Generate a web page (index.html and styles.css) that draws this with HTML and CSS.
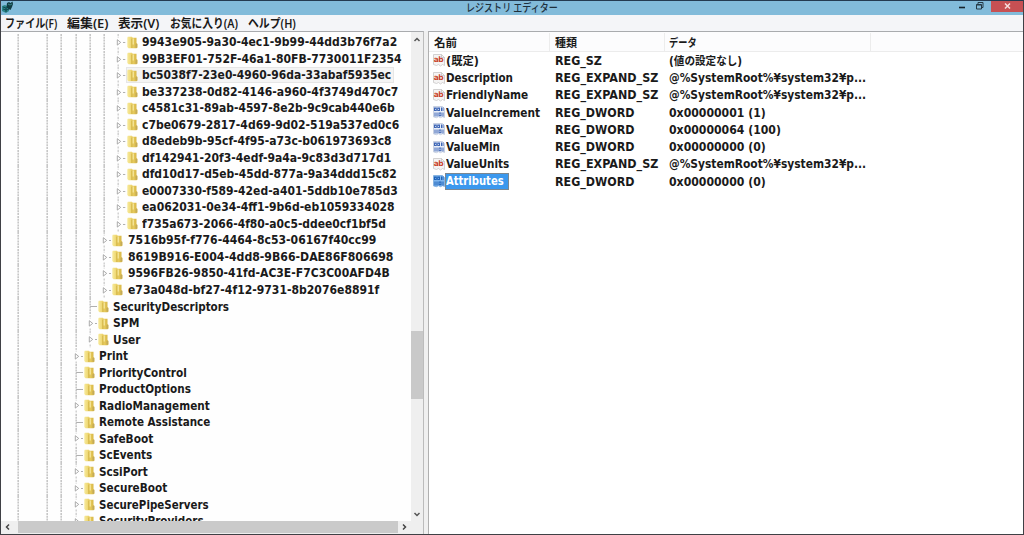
FILE: index.html
```html
<!DOCTYPE html>
<html lang="ja">
<head>
<meta charset="utf-8">
<title>レジストリ エディター</title>
<link rel="stylesheet" href="styles.css">
</head>
<body>
<svg class="defs" width="0" height="0">
  <defs>
    <linearGradient id="gold" x1="0" x2="1" y1="0" y2="0"><stop offset="0" stop-color="#f7ea9c"/><stop offset=".5" stop-color="#ebd064"/><stop offset="1" stop-color="#d3b13f"/></linearGradient>
    <symbol id="folder" viewBox="0 0 11 13"><path d="M.8.800h4l1 1H9.500v5.200l1 1v3.600l-1 .6H1.500L.3 11V1.800z" fill="url(#gold)"/><path d="M4.900 2.500v9.500" stroke="#cbaa3c" stroke-width=".9"/><path d="M6.200 2.500v6" stroke="#fbf0b0" stroke-width="1"/><path d="M9.200 8v3.500" stroke="#b9a466" stroke-width="1"/></symbol>
    <symbol id="string" viewBox="0 0 12 13"><path d="M.5.500h8l3 3v8l-2-1-2 1.500-2-1.500-2 1-3-1z" fill="#f5f4f4" stroke="#c9c7c7" stroke-width=".8"/><path d="M8.500.500v3h3" fill="none" stroke="#bbb" stroke-width=".7"/><text x=".8" y="8" class="ab">ab</text></symbol>
    <symbol id="binary" viewBox="0 0 12 13"><path d="M.5.500h9l2 2v9l-2-.8-2 1-2-1-2 1-3-.8z" fill="#e7edf8" stroke="#bdc7da" stroke-width=".8"/><g fill="none" stroke="#3d65b5" stroke-width="1"><rect x="1.500" y="2" width="1.800" height="2.500"/><rect x="4.700" y="2" width="1.800" height="2.500"/><path d="M8.500 1.500v3.500M10 1.500v3.500M2 6.500v4M4 6.500v4M10 6.500v4"/><rect x="6" y="7" width="2" height="2.700"/></g></symbol>
    <symbol id="binary-selected" viewBox="0 0 12 13"><path d="M.5.500h9l2 2v9l-2-.8-2 1-2-1-2 1-3-.8z" fill="#7fb6ee" stroke="#78a9dc" stroke-width=".8"/><g fill="none" stroke="#1f62b8" stroke-width="1"><rect x="1.500" y="2" width="1.800" height="2.500"/><rect x="4.700" y="2" width="1.800" height="2.500"/><path d="M8.500 1.500v3.500M10 1.500v3.500M2 6.500v4M4 6.500v4M10 6.500v4"/><rect x="6" y="7" width="2" height="2.700"/></g></symbol>
  </defs>
</svg>
<div class="window">
  <header class="titlebar">
    <svg class="app-icon" viewBox="0 0 12 12"><path d="M0 5l3-1 4 2v4l-3 2-4-2z" fill="#2a8588"/><path d="M1 6l3 1 3-1M4 7v4M1 8l3 1 3-1" stroke="#0c3c43" fill="none" stroke-width=".8"/><path d="M5 2l2-1 1.500 1L10.500.500 11 3l-1 3-1.500 3-2-1-2-2z" fill="#123d43"/><path d="M6 3l2 1 2-1" stroke="#4ba7a7" stroke-width=".7" fill="none"/></svg>
    <h1 class="title"><span class="fit" data-w="92">レジストリ エディター</span></h1>
    <svg class="window-btn" viewBox="0 0 18 14"><path d="M6 6.500h6" stroke="#17232b" stroke-width="1.600"/></svg>
    <svg class="window-btn" viewBox="0 0 18 14"><path d="M5.500 3.500h5v4.500h-5zM7 3V1.500h5v5h-1.500M5.500 4h5" fill="none" stroke="#263b47" stroke-width="1"/></svg>
    <svg class="close-btn" viewBox="0 0 32 11"><path d="M14 2.500l5 5M19 2.500l-5 5" stroke="#f6dede" stroke-width="1.500"/></svg>
  </header>
  <nav class="menu">
    <span class="menu-item m-file"><span class="fit" data-w="52">ファイル(F)</span></span>
    <span class="menu-item m-edit"><span class="fit" data-w="41">編集(E)</span></span>
    <span class="menu-item m-view"><span class="fit" data-w="41">表示(V)</span></span>
    <span class="menu-item m-fav"><span class="fit" data-w="68">お気に入り(A)</span></span>
    <span class="menu-item"><span class="fit" data-w="48">ヘルプ(H)</span></span>
  </nav>
  <main class="panes">
    <section class="tree-pane">
      <div class="tree-row-area">
        <div class="tree" id="tree"></div>
        <div class="vscroll">
          <svg class="v-arrow" viewBox="0 0 12 16"><path d="M3.500 9L6 6.500 8.500 9" fill="none" stroke="#555" stroke-width="1.500"/></svg>
          <div class="v-thumb"></div>
          <svg class="v-arrow" viewBox="0 0 12 16"><path d="M3.500 8L6 10.500 8.500 8" fill="none" stroke="#555" stroke-width="1.500"/></svg>
        </div>
      </div>
      <div class="hscroll">
        <svg class="h-arrow" viewBox="0 0 17 12"><path d="M8 3.500L5.500 6 8 8.500" fill="none" stroke="#444" stroke-width="1.500"/></svg>
        <div class="h-thumb"></div>
        <svg class="h-arrow" viewBox="0 0 17 12"><path d="M5 3.500L7.500 6 5 8.500" fill="none" stroke="#444" stroke-width="1.500"/></svg>
      </div>
    </section>
    <section class="value-pane" id="values"></section>
  </main>
</div>
<script src="app.js"></script>
</body>
</html>
```
FILE: styles.css
```css
* { box-sizing: border-box; }
body { margin: 0; overflow: hidden; }
.defs { display: block; }
.window {
  width: 1024px; height: 535px;
  display: flex; flex-direction: column;
  border: 1px solid #3f4045; border-top-color: #243a50;
  background: #f4f5f8;
  font: bold 11.600px/16px "DejaVu Sans", "Noto Sans CJK JP", sans-serif;
  color: #1a1a1a;
}
.fit { display: inline-block; white-space: pre; transform-origin: 0 50%; }
.titlebar { height: 14px; flex: none; display: flex; background: #82bbda; }
.app-icon { width: 12px; height: 12px; margin: 0 0 0 1px; }
.title {
  margin: 0 0 0 452px; width: 487px;
  font: 500 11px/12px "Noto Sans CJK JP", sans-serif; color: #1e303c;
}
.window-btn { width: 18px; height: 14px; }
.close-btn { width: 32px; height: 11px; margin-left: 2px; background: #c75053; flex: 1; }
.menu {
  height: 16px; flex: none; display: flex; padding-left: 4px;
  font: 600 12px/17px "Noto Sans", "Noto Sans CJK JP", sans-serif;
}
.menu-item { width: 50px; }
.m-file { width: 62px; }
.m-edit { width: 51px; }
.m-view { width: 52px; }
.m-fav { width: 78px; }
.panes { flex: 1; min-height: 0; display: flex; gap: 4px; background: #f0f0f0; }
.tree-pane {
  width: 423px; display: flex; flex-direction: column;
  border-top: 1px solid #a9abae; border-right: 1px solid #bcbcbc;
  background: #fefefe;
}
.tree-row-area { flex: 1; min-height: 0; display: flex; }
.tree { flex: 1; overflow: hidden; padding: 2px 0 0 10.350px; }
.row { height: 16.520px; display: flex; align-items: center; }
.guide { width: 14.300px; height: 16.520px; flex: none; }
.folder { width: 11px; height: 13px; flex: none; margin-left: 1px; }
.label { margin-left: 4.200px; }
.entry { display: flex; align-items: center; height: 16px; }
.entry.current { background: #f4f4f4; outline: 1px solid #e6e6e6; outline-offset: -1px; width: 268px; }
.vscroll { width: 12px; display: flex; flex-direction: column; background: #efefef; }
.v-arrow { width: 12px; height: 16px; flex: none; }
.v-thumb { height: 68px; margin: 283px 0 auto; background: #c9c9c9; }
.hscroll { height: 13px; flex: none; display: flex; padding-right: 8px; background: #efefef; }
.h-arrow { width: 17px; height: 12px; flex: none; }
.h-thumb { width: 380px; height: 12px; background: #cacaca; }
.value-pane { flex: 1; background: #fff; border-top: 1px solid #a9abae; border-left: 1px solid #b0b0b0; }
.cells { display: flex; height: 17.270px; align-items: center; }
.head { height: 20px; padding-top: 1px; margin-bottom: .2px; border-bottom: 1px solid #ececec; background: #fcfcfd; font-family: "Noto Sans CJK JP", sans-serif; font-size: 11.500px; }
.head .name { padding-left: 5px; }
.head .name, .head .kind, .head .data { height: 18px; line-height: 18px; border-right: 1px solid #ececec; }
.name { width: 121px; display: flex; align-items: center; }
.kind { width: 115px; padding-left: 5px; }
.data { width: 206px; padding-left: 4px; }
.value-icon { width: 12px; height: 13px; flex: none; margin-left: 4px; }
.value-name { margin-left: 1px; white-space: nowrap; }
.selected .value-name { width: 64px; height: 17px; margin-left: 0; background: #3b98ee; color: #fff; outline: 1px solid #7b8791; outline-offset: -1px; padding-left: 1px; }
.ab { font: bold 7.500px "DejaVu Sans", sans-serif; fill: #c9442c; letter-spacing: -.5px; }
```
FILE: app.js
```js
// Each key: depth, has children, name, displayed width.
const keys = [
  [7, 1, "9943e905-9a30-4ec1-9b99-44dd3b76f7a2", 255],
  [7, 1, "99B3EF01-752F-46a1-80FB-7730011F2354", 260],
  [7, 1, "bc5038f7-23e0-4960-96da-33abaf5935ec", 249.5],
  [7, 1, "be337238-0d82-4146-a960-4f3749d470c7", 256],
  [7, 1, "c4581c31-89ab-4597-8e2b-9c9cab440e6b", 253],
  [7, 1, "c7be0679-2817-4d69-9d02-519a537ed0c6", 257],
  [7, 1, "d8edeb9b-95cf-4f95-a73c-b061973693c8", 249.5],
  [7, 1, "df142941-20f3-4edf-9a4a-9c83d3d717d1", 249],
  [7, 1, "dfd10d17-d5eb-45dd-877a-9a34ddd15c82", 255],
  [7, 1, "e0007330-f589-42ed-a401-5ddb10e785d3", 256],
  [7, 1, "ea062031-0e34-4ff1-9b6d-eb1059334028", 253],
  [7, 1, "f735a673-2066-4f80-a0c5-ddee0cf1bf5d", 244],
  [6, 1, "7516b95f-f776-4464-8c53-06167f40cc99", 248.5],
  [6, 1, "8619B916-E004-4dd8-9B66-DAE86F806698", 265],
  [6, 1, "9596FB26-9850-41fd-AC3E-F7C3C00AFD4B", 261.5],
  [6, 1, "e73a048d-bf27-4f12-9731-8b2076e8891f", 251],
  [5, 0, "SecurityDescriptors", 116.5],
  [5, 1, "SPM", 26],
  [5, 1, "User", 27.5],
  [4, 1, "Print", 29],
  [4, 0, "PriorityControl", 88],
  [4, 0, "ProductOptions", 92],
  [4, 1, "RadioManagement", 110.5],
  [4, 0, "Remote Assistance", 111],
  [4, 1, "SafeBoot", 54],
  [4, 0, "ScEvents", 53],
  [4, 1, "ScsiPort", 49],
  [4, 1, "SecureBoot", 68],
  [4, 1, "SecurePipeServers", 110],
  [4, 1, "SecurityProviders", 105],
];
const dotted = 'stroke="#b4b4b4" stroke-width="1.2" stroke-dasharray="2 .8"';
const line = `<svg class="guide" viewBox="0 0 14.3 16.52"><path d="M7.15 0v16.52" ${dotted}/></svg>`;
const blank = '<span class="guide"></span>';
const branch = '<svg class="guide" viewBox="0 0 14.3 16.52"><path d="M7.15 0v3.5M7.15 13.5v3" stroke="#c0c0c0" stroke-width="1.1" stroke-dasharray="2 .8"/><path d="M6.3 5.7v5.4l3.4-2.7z" fill="#fff" stroke="#a2a2a2" stroke-width=".9"/><path d="M12 8.500h2.300" stroke="#b0b0b0"/></svg>';
const leaf = `<svg class="guide" viewBox="0 0 14.3 16.52"><path d="M7.15 0v16.52" ${dotted}/><path d="M7.15 8.500h7.2" stroke="#b0b0b0"/></svg>`;
const fit = (text, width) => `<span class="fit" data-w="${width}">${text}</span>`;

document.getElementById("tree").innerHTML = keys.map(([depth, open, name, width], i) => {
  let guides = "";
  for (let d = 0; d < depth; d++) guides += d === 1 ? blank : line;
  return `<div class="row">${guides}${open ? branch : leaf}<div class="entry${i === 2 ? " current" : ""}"><svg class="folder"><use href="#folder"/></svg><span class="label">${fit(name, width)}</span></div></div>`;
}).join("");

const path = "@%SystemRoot%¥system32¥p...";
const values = [
  ["string", "(既定)", 33, "REG_SZ", 47, "(値の設定なし)", 73],
  ["string", "Description", 67, "REG_EXPAND_SZ", 103, path, 197],
  ["string", "FriendlyName", 82, "REG_EXPAND_SZ", 103, path, 197],
  ["binary", "ValueIncrement", 94, "REG_DWORD", 79.5, "0x00000001 (1)", 97],
  ["binary", "ValueMax", 57, "REG_DWORD", 79.5, "0x00000064 (100)", 112],
  ["binary", "ValueMin", 54, "REG_DWORD", 79.5, "0x00000000 (0)", 97],
  ["string", "ValueUnits", 63, "REG_EXPAND_SZ", 103, path, 197],
  ["binary-selected", "Attributes", 58, "REG_DWORD", 79.5, "0x00000000 (0)", 97],
];
document.getElementById("values").innerHTML =
  `<div class="cells head"><div class="name">${fit("名前", 23)}</div><div class="kind">${fit("種類", 22)}</div><div class="data">${fit("データ", 28)}</div></div>` +
  values.map(([icon, name, nw, kind, kw, data, dw], i) =>
    `<div class="cells${i === 7 ? " selected" : ""}"><div class="name"><svg class="value-icon"><use href="#${icon}"/></svg><span class="value-name">${fit(name, nw)}</span></div><div class="kind">${fit(kind, kw)}</div><div class="data">${fit(data, dw)}</div></div>`
  ).join("");

for (const el of document.querySelectorAll(".fit")) {
  const scale = el.dataset.w / el.offsetWidth;
  el.style.transform = `scaleX(${scale})`;
  el.style.marginRight = `${el.dataset.w - el.offsetWidth}px`;
}
```
